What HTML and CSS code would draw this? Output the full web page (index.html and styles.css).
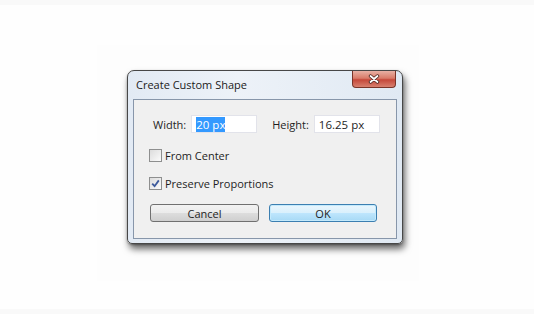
FILE: index.html
```html
<!DOCTYPE html>
<html lang="en">
<head>
    <meta charset="UTF-8">
    <meta name="viewport" content="width=device-width, initial-scale=1.0">
    <title>Create Custom Shape</title>
    <link rel="stylesheet" href="styles.css">
</head>
<body>
    <div class="strip"></div>

    <div class="stage">
        <div class="backdrop">
            <div class="window">
                <div class="titlebar">
                    <span class="title">Create Custom Shape</span>
                    <div class="close-btn">
                        <svg width="14" height="10" viewBox="0 0 14 10">
                            <path d="M3.5 2 L10.5 8 M10.5 2 L3.5 8" stroke="#4a2520" stroke-width="3.4" stroke-linecap="round"/>
                            <path d="M3.5 2 L10.5 8 M10.5 2 L3.5 8" stroke="#ffffff" stroke-width="1.8" stroke-linecap="round"/>
                        </svg>
                    </div>
                </div>

                <div class="client">
                    <div class="size-row">
                        <label>Width:</label>
                        <div class="field"><span class="selected">20 px</span></div>
                        <label class="second">Height:</label>
                        <div class="field">16.25 px</div>
                    </div>

                    <div class="check-row">
                        <span class="checkbox"></span>
                        <span>From Center</span>
                    </div>
                    <div class="check-row">
                        <span class="checkbox">
                            <svg width="9" height="9" viewBox="0 0 9 9">
                                <path d="M1.2 4.6 L3.6 7.2 L7.8 1.4" fill="none" stroke="#3d5a9c" stroke-width="1.8"/>
                            </svg>
                        </span>
                        <span>Preserve Proportions</span>
                    </div>

                    <div class="buttons">
                        <div class="btn">Cancel</div>
                        <div class="btn default">OK</div>
                    </div>
                </div>
            </div>
        </div>
    </div>

    <div class="strip"></div>
</body>
</html>
```

FILE: styles.css
```css
body {
    margin: 0;
    padding: 0;
    background: #fefefe;
    font-family: 'Open Sans', 'DejaVu Sans', sans-serif;
    font-size: 11px;
    color: #1e1e1e;
}
.strip {
    height: 5px;
    background: #f9f9f9;
}
.stage {
    height: 304px;
    padding-top: 40px;
    box-sizing: border-box;
}
.backdrop {
    margin-left: 97px;
    width: 322px;
    height: 236px;
    background: #fdfdfd;
    padding: 25px 0 0 30px;
    box-sizing: border-box;
}
.window {
    width: 276px;
    height: 174px;
    box-sizing: border-box;
    border: 1px solid #474747;
    border-radius: 7px 7px 5px 5px;
    background: linear-gradient(to right, #e2eaf4, #edf2f8 40%, #e0e9f3);
    box-shadow: 2px 5px 7px rgba(0,0,0,0.6), 0 1px 2px rgba(0,0,0,0.3);
    padding: 0 5px 5px 5px;
}
.titlebar {
    height: 28px;
    display: flex;
    justify-content: space-between;
    align-items: flex-start;
}
.title {
    padding: 6px 0 0 3px;
    font-size: 11px;
    color: #1a1a1a;
}
.close-btn {
    width: 44px;
    height: 17px;
    margin-right: 1px;
    box-sizing: border-box;
    border: 1px solid #7a3428;
    border-top: none;
    border-radius: 0 0 4px 4px;
    background: linear-gradient(#e8b0a4, #d97b69 45%, #c5483a 55%, #d8806f);
    display: flex;
    align-items: center;
    justify-content: center;
}
.close-btn svg {
    display: block;
}
.client {
    height: 140px;
    box-sizing: border-box;
    border: 1px solid #8796aa;
    background: #f0f0f0;
    padding: 15px 0 0 15px;
}
.size-row {
    display: flex;
    align-items: center;
    height: 18px;
    padding-left: 4px;
}
.size-row label {
    margin-right: 5px;
}
.size-row label.second {
    margin-left: 15px;
}
.field {
    width: 66px;
    height: 18px;
    box-sizing: border-box;
    background: #fff;
    border: 1px solid #e2e3ea;
    padding: 2px 0 0 4px;
    line-height: 13px;
    font-size: 11.5px;
}
.selected {
    background: #3399ff;
    color: #fff;
}
.check-row {
    display: flex;
    align-items: center;
    gap: 3px;
    height: 13px;
    margin-top: 16px;
}
.check-row + .check-row {
    margin-top: 15px;
}
.checkbox {
    width: 13px;
    height: 13px;
    box-sizing: border-box;
    border: 1px solid #8e8f8f;
    background: linear-gradient(135deg, #dcdcdc, #fbfbfb);
    display: flex;
    align-items: center;
    justify-content: center;
}
.checkbox svg {
    display: block;
}
.buttons {
    display: flex;
    gap: 10px;
    margin-top: 14px;
    padding-left: 1px;
}
.btn {
    height: 18px;
    box-sizing: border-box;
    border: 1px solid #707070;
    border-radius: 3px;
    background: linear-gradient(#f2f2f2, #ebebeb 50%, #dddddd 51%, #cfcfcf);
    display: flex;
    align-items: center;
    justify-content: center;
    width: 109px;
}
.btn.default {
    width: 108px;
    border-color: #3c7fb1;
    background: linear-gradient(#eaf6fd, #d9f0fc 50%, #bee6fd 51%, #a7d9f5);
    box-shadow: inset 0 0 0 1px #c4eafc;
}
```
